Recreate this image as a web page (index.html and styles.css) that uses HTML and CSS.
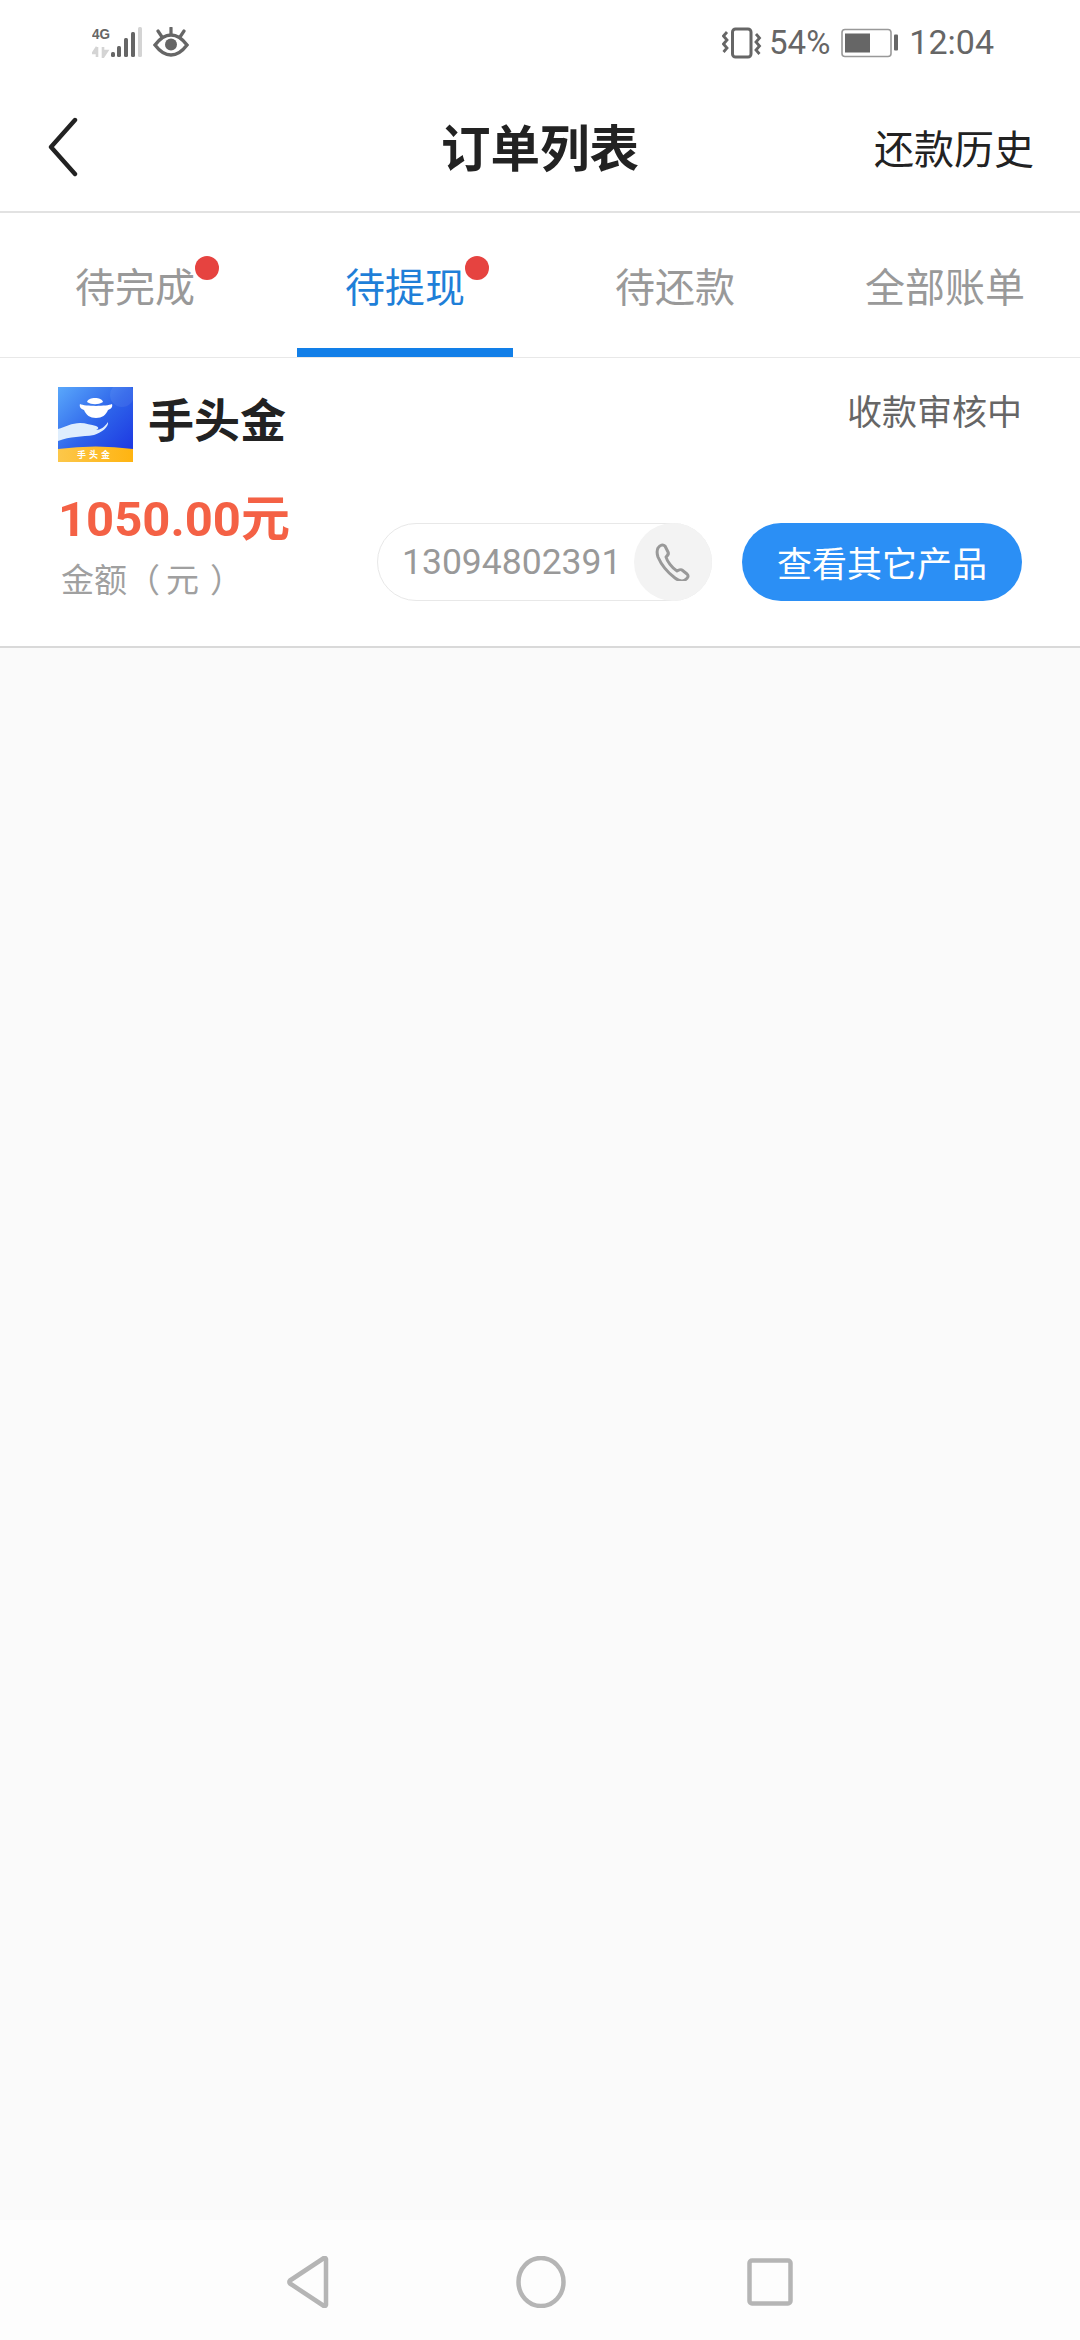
FILE: index.html
```html
<!DOCTYPE html>
<html lang="zh">
<head>
<meta charset="utf-8">
<title>订单列表</title>
<link rel="stylesheet" href="styles.css">
</head>
<body>
<div class="screen">
  <div class="status">
    <div class="status-left">
      <svg class="ic-signal" width="50" height="39" viewBox="0 -8 50 39">
        <text x="0" y="12" class="net" textLength="18" lengthAdjust="spacingAndGlyphs">4G</text>
        <path d="M5 30V20M5 20l-4 6h4" stroke="#d4d4d4" stroke-width="2.600" fill="none"/>
        <path d="M11 20v10l4-6h-4" stroke="#d4d4d4" stroke-width="2.600" fill="none"/>
        <rect x="19" y="25" width="4" height="5" rx="1.500" fill="#666"/>
        <rect x="25" y="19" width="4" height="11" rx="1.500" fill="#666"/>
        <rect x="32" y="11" width="4" height="19" rx="1.500" fill="#666"/>
        <rect x="39" y="5" width="4" height="25" rx="1.500" fill="#666"/>
        <rect x="46" y="0" width="4" height="30" rx="1.500" fill="#d4d4d4"/>
      </svg>
      <svg class="ic-eye" width="36" height="30" viewBox="0 0 36 30">
        <path d="M2 18C8 10 13 8 18 8s10 2 16 10c-6 8-11 10-16 10S8 26 2 18z" fill="none" stroke="#666" stroke-width="3.400"/>
        <circle cx="18" cy="17.500" r="6" fill="#666"/>
        <path d="M18 1v6M5 4l4 6M31 4l-4 6" stroke="#666" stroke-width="3.200" stroke-linecap="round"/>
      </svg>
    </div>
    <div class="status-right">
      <svg class="ic-vib" width="40" height="32" viewBox="0 0 40 32">
        <rect x="10.500" y="2" width="18.500" height="28" rx="3" fill="none" stroke="#666" stroke-width="3"/>
        <path d="M5 5L1.500 9 5 13l-3.500 4L5 21l-3.500 4M34 7l3.500 4-3.500 4 3.500 4-3.500 4 3.500 4" fill="none" stroke="#666" stroke-width="2.800"/>
      </svg>
      <span class="st-text st-pct">54%</span>
      <svg class="ic-bat" width="58" height="30" viewBox="0 0 58 30">
        <rect x="1" y="1.500" width="49" height="27" rx="3" fill="none" stroke="#999" stroke-width="1.600"/>
        <rect x="4" y="5.500" width="25" height="19" fill="#666"/>
        <rect x="53" y="6.500" width="4" height="16" rx="1" fill="#666"/>
      </svg>
      <span class="st-text st-time">12:04</span>
    </div>
  </div>

  <header class="topbar">
    <svg class="back" width="34" height="60" viewBox="0 0 34 60">
      <path d="M28 3L4 30l24 27" fill="none" stroke="#222" stroke-width="4.400" stroke-linecap="round" stroke-linejoin="round"/>
    </svg>
    <h1 class="title">订单列表</h1>
    <span class="history">还款历史</span>
  </header>

  <nav class="tabs">
    <div class="tab"><span class="tab-label">待完成<i class="dot"></i></span></div>
    <div class="tab active"><span class="tab-label">待提现<i class="dot"></i></span></div>
    <div class="tab"><span class="tab-label">待还款</span></div>
    <div class="tab"><span class="tab-label">全部账单</span></div>
  </nav>

  <section class="card">
    <div class="card-top">
      <div class="brand">
        <svg class="logo" width="75" height="75" viewBox="0 0 75 75">
          <defs>
            <linearGradient id="lg" x1="0" y1="0" x2="1" y2="1">
              <stop offset="0" stop-color="#5aa8fb"/>
              <stop offset="0.5" stop-color="#2d63ea"/>
              <stop offset="1" stop-color="#1a2fe0"/>
            </linearGradient>
            <linearGradient id="lo" x1="0" y1="0" x2="1" y2="0">
              <stop offset="0" stop-color="#fcc74a"/>
              <stop offset="1" stop-color="#ffb411"/>
            </linearGradient>
          </defs>
          <rect width="75" height="75" fill="url(#lg)"/>
          <circle cx="64" cy="8" r="12" fill="#fff" opacity="0.07"/>
          <path d="M0 62q38-5 75 0v13H0z" fill="url(#lo)"/>
          <path d="M29 15c1-3 4-4 8-4s7 1 8 4c-5 3-11 3-16 0z" fill="#fff"/>
          <path d="M22 17c5 2.500 27 2.500 32 0 1 3-1 5-4 6-2 5-6 8-12 8s-10-3-12-8c-3-1-5-3-4-6z" fill="#fff"/>
          <path d="M0 42c7-2 14-6 22-6 6 0 11 2 16 3 3 1 3 3 0 4 4 0 9-3 12-8 1 5-7 11-14 13-12 2-24 1-36 6z" fill="#dfeefd"/>
          <text x="37" y="71" class="logo-text">手头金</text>
        </svg>
        <span class="brand-name">手头金</span>
      </div>
      <span class="state">收款审核中</span>
    </div>
    <div class="card-bottom">
      <div class="amount">
        <div class="amount-num">1050.00元</div>
        <div class="amount-label">金额（<span class="unit">元</span>）</div>
      </div>
      <div class="actions">
        <div class="phone">
          <span class="phone-num">13094802391</span>
          <span class="phone-btn">
            <svg width="36" height="38" viewBox="0 0 36 38">
              <path d="M3 5c2-3 5-4 7-2l3 6c1 2 0 3-2 5 1 4 6 11 11 14 2-1 4-2 5-1l5 4c2 2 1 4-2 6-3 2-6 1-10-2C12 29 6 21 3 14c-1-3-1-7 0-9z" fill="none" stroke="#999" stroke-width="3" stroke-linejoin="round"/>
            </svg>
          </span>
        </div>
        <button class="other">查看其它产品</button>
      </div>
    </div>
  </section>

  <main class="empty"></main>

  <footer class="navbar">
    <svg width="44" height="52" viewBox="0 0 44 52">
      <path d="M39 3v46a1.500 1.500 0 0 1-2 1L3 27.500a2 2 0 0 1 0-3L37 2a1.500 1.500 0 0 1 2 1z" fill="none" stroke="#b5b5b5" stroke-width="4.500" stroke-linejoin="round"/>
    </svg>
    <svg width="50" height="52" viewBox="0 0 50 52">
      <ellipse cx="25" cy="26" rx="22.500" ry="24" fill="none" stroke="#b5b5b5" stroke-width="4.500"/>
    </svg>
    <svg width="46" height="48" viewBox="0 0 46 48">
      <rect x="2.500" y="2.500" width="41" height="43" rx="2.500" fill="none" stroke="#b5b5b5" stroke-width="4.500"/>
    </svg>
  </footer>
</div>
</body>
</html>
```

FILE: styles.css
```css
* { box-sizing: border-box; }
html, body { margin: 0; padding: 0; }
body {
  width: 1080px;
  height: 2340px;
  font-family: "Noto Sans CJK SC", "Noto Sans", sans-serif;
  background: #fafafa;
}
.screen {
  width: 1080px;
  height: 2340px;
  display: flex;
  flex-direction: column;
  overflow: hidden;
}
.status {
  height: 84px;
  flex: none;
  background: #fff;
  display: flex;
  justify-content: space-between;
  align-items: flex-start;
  padding: 27px 86px 0 92px;
}
.status-left { display: flex; align-items: flex-start; gap: 11px; }
.ic-signal { margin-top: -8px; }
.status-right { display: flex; align-items: center; height: 31px; }
.st-text {
  font-family: Roboto, sans-serif;
  font-size: 33px;
  color: #666;
  line-height: 31px;
}
.st-pct { margin: 0 11px 0 7px; }
.st-time { font-size: 34px; margin-left: 10px; }
.net {
  font-family: "Liberation Sans", sans-serif;
  font-weight: 700;
  font-size: 15.500px;
  fill: #666;
}
.topbar {
  height: 129px;
  flex: none;
  background: #fff;
  border-bottom: 2px solid #e2e2e2;
  display: flex;
  align-items: center;
  justify-content: space-between;
  position: relative;
  padding: 0 46px 0 47px;
}
.back { margin-bottom: 2px; }
.title {
  position: absolute;
  left: 0;
  right: 0;
  top: 32px;
  margin: 0;
  text-align: center;
  font-size: 49.500px;
  font-weight: 700;
  color: #222;
  line-height: 60px;
}
.history { font-size: 40px; color: #222; line-height: 60px; margin-bottom: 1px; }
.tabs {
  height: 145px;
  flex: none;
  background: #fff;
  border-bottom: 1px solid #e8e8e8;
  display: grid;
  grid-template-columns: repeat(4, 270px);
}
.tab {
  display: flex;
  justify-content: center;
  align-items: flex-start;
  padding-top: 42px;
  position: relative;
  color: #999;
  font-size: 40px;
  line-height: 60px;
}
.tab-label { position: relative; }
.tab.active { color: #1f7fd8; }
.tab.active::after {
  content: "";
  position: absolute;
  left: 27px;
  right: 27px;
  bottom: 0;
  height: 9px;
  background: #127fe8;
}
.dot {
  position: absolute;
  top: 1px;
  right: -24px;
  width: 24px;
  height: 24px;
  border-radius: 50%;
  background: #e64340;
}
.card {
  height: 290px;
  flex: none;
  background: #fff;
  border-bottom: 2px solid #d9d9d9;
  padding: 29px 58px 0;
}
.card-top { display: flex; justify-content: space-between; align-items: flex-start; height: 75px; }
.brand { display: flex; align-items: flex-start; gap: 15px; }
.logo { display: block; }
.logo-text {
  font-family: "Noto Sans CJK SC", sans-serif;
  font-size: 9px;
  font-weight: 700;
  fill: #fff;
  text-anchor: middle;
  letter-spacing: 3px;
}
.brand-name { font-size: 46px; font-weight: 700; color: #222; line-height: 60px; }
.state { font-size: 35px; color: #666; line-height: 50px; margin-top: -2px; }
.card-bottom {
  display: flex;
  justify-content: space-between;
  align-items: flex-start;
  margin-top: 28px;
}
.amount-num {
  font-family: Roboto, "Noto Sans CJK SC", sans-serif;
  font-weight: 700;
  font-size: 49px;
  line-height: 60px;
  color: #f46145;
}
.amount-label {
  font-size: 33px;
  color: #a0a0a0;
  line-height: 46px;
  margin-left: 3px;
  margin-top: 5px;
}
.unit { margin: 0 11px 0 6px; }
.actions { display: flex; gap: 30px; margin-top: 33px; }
.phone {
  width: 335px;
  height: 78px;
  border: 1px solid #e8e8e8;
  border-radius: 39px;
  display: flex;
  align-items: center;
  justify-content: space-between;
  background: #fff;
}
.phone-num {
  font-family: Roboto, sans-serif;
  font-size: 35.500px;
  color: #999;
  padding-left: 24px;
  white-space: nowrap;
}
.phone-btn {
  width: 78px;
  height: 78px;
  margin: -1px;
  border-radius: 50%;
  background: #f3f3f3;
  display: flex;
  align-items: center;
  justify-content: center;
}
.other {
  width: 280px;
  height: 78px;
  border: none;
  border-radius: 39px;
  background: #2b8ff5;
  color: #fff;
  font-family: "Noto Sans CJK SC", sans-serif;
  font-size: 35px;
  padding: 0 0 2px;
}
.empty { flex: 1; background: #fafafa; }
.navbar {
  height: 120px;
  flex: none;
  background: #fdfdfd;
  display: flex;
  align-items: flex-start;
  padding-top: 36px;
  padding-left: 287px;
}
.navbar svg:nth-child(2) { margin-left: 185px; }
.navbar svg:nth-child(3) { margin-left: 181px; margin-top: 2px; }
```
